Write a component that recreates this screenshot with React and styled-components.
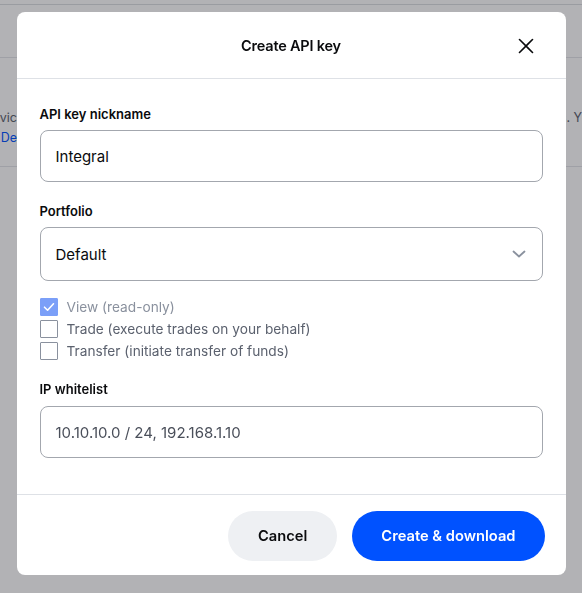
import React from "react";
import styled, { createGlobalStyle } from "styled-components";

const GlobalStyle = createGlobalStyle`
  html, body {
    margin: 0;
    padding: 0;
    background: #ffffff;
    font-family: Inter, "Noto Sans", sans-serif;
    -webkit-font-smoothing: antialiased;
  }
  * { box-sizing: border-box; }
`;

const Page = styled.div`
  width: 582px;
  height: 593px;
  overflow: hidden;
  background: #ffffff;
`;

const TopBand = styled.div`
  height: 5px;
  border-bottom: 1px solid #dcdee2;
`;

const PageHeader = styled.div`
  height: 53px;
  border-bottom: 1px solid #e3e5e9;
`;

const PageSection = styled.div`
  height: 109px;
  border-bottom: 1px solid #e3e5e9;
  display: flex;
  justify-content: space-between;
  align-items: flex-start;
  padding-top: 50px;
`;

const BgColumn = styled.div`
  width: ${(p) => (p.$right ? "auto" : "17px")};
  display: flex;
  flex-direction: column;
  align-items: ${(p) => (p.$right ? "flex-start" : "flex-end")};
  white-space: nowrap;
  font-size: 12.5px;
  line-height: 20px;
  color: #5b616e;
`;

const BgLink = styled.span`
  color: #0052ff;
`;

const Overlay = styled.div`
  position: fixed;
  inset: 0;
  background: rgba(20, 22, 30, 0.33);
  display: flex;
  align-items: flex-start;
  justify-content: center;
  padding-top: 12px;
`;

const Modal = styled.div`
  width: 549px;
  background: #ffffff;
  border-radius: 8px;
  display: flex;
  flex-direction: column;
`;

const Header = styled.div`
  height: 67px;
  border-bottom: 1px solid #dee1e6;
  display: flex;
  align-items: center;
  justify-content: center;
  position: relative;
`;

const Title = styled.h2`
  margin: 0;
  font-size: 14.5px;
  font-weight: 600;
  color: #0a0b0d;
  letter-spacing: -0.2px;
`;

const CloseButton = styled.button`
  position: absolute;
  right: 29px;
  top: 23px;
  width: 22px;
  height: 22px;
  padding: 0;
  border: none;
  background: transparent;
  display: flex;
  align-items: center;
  justify-content: center;
  cursor: pointer;
`;

const Body = styled.div`
  padding: 27px 23px 36px;
  display: flex;
  flex-direction: column;
`;

const Field = styled.div`
  display: flex;
  flex-direction: column;
  margin-top: ${(p) => p.$top || 0}px;
`;

const Label = styled.label`
  font-size: 13px;
  line-height: 16px;
  font-weight: 600;
  color: #0a0b0d;
  margin-bottom: ${(p) => p.$gap || 8}px;
`;

const Input = styled.div`
  height: ${(p) => p.$height || 52}px;
  border: 1px solid #a3a7ae;
  border-radius: 8px;
  display: flex;
  align-items: center;
  justify-content: space-between;
  padding: 0 16px 0 15px;
  font-size: 15px;
  color: ${(p) => (p.$muted ? "#4a4f5a" : "#0a0b0d")};
`;

const CheckList = styled.div`
  display: flex;
  flex-direction: column;
  margin-top: 15px;
`;

const CheckRow = styled.div`
  height: 22px;
  display: flex;
  align-items: center;
  gap: 9px;
  font-size: 13.7px;
  color: ${(p) => (p.$disabled ? "#8a919e" : "#5b616e")};
`;

const Box = styled.span`
  width: 18px;
  height: 18px;
  border: 1px solid ${(p) => (p.$checked ? "#7b9ff8" : "#8a919e")};
  background: ${(p) => (p.$checked ? "#7b9ff8" : "#ffffff")};
  border-radius: 1px;
  display: flex;
  align-items: center;
  justify-content: center;
`;

const Footer = styled.div`
  border-top: 1px solid #dee1e6;
  padding: 16px 21px 14px;
  display: flex;
  justify-content: flex-end;
  gap: 15px;
`;

const Button = styled.button`
  height: 50px;
  border: none;
  border-radius: 25px;
  padding: 0 ${(p) => (p.$primary ? 29 : 30)}px;
  font-family: inherit;
  font-size: 14.7px;
  font-weight: 600;
  background: ${(p) => (p.$primary ? "#0052ff" : "#eef0f3")};
  color: ${(p) => (p.$primary ? "#ffffff" : "#0a0b0d")};
  cursor: pointer;
`;

function Checkbox({ checked, disabled, children }) {
  return (
    <CheckRow $disabled={disabled}>
      <Box $checked={checked}>
        {checked && (
          <svg width="12" height="10" viewBox="0 0 12 10" fill="none">
            <path d="M1.5 5.2L4.6 8.2L10.5 1.8" stroke="#ffffff" strokeWidth="1.6" strokeLinecap="round" strokeLinejoin="round" />
          </svg>
        )}
      </Box>
      {children}
    </CheckRow>
  );
}

export default function App() {
  return (
    <>
      <GlobalStyle />
      <Page>
        <TopBand />
        <PageHeader />
        <PageSection>
          <BgColumn>
            <span>API servic</span>
            <BgLink>the De</BgLink>
          </BgColumn>
          <BgColumn $right>
            <span>s. Y</span>
          </BgColumn>
        </PageSection>
      </Page>
      <Overlay>
        <Modal>
          <Header>
            <Title>Create API key</Title>
            <CloseButton aria-label="Close">
              <svg width="16" height="16" viewBox="0 0 16 16" fill="none">
                <path d="M1.5 1.5L14.5 14.5M14.5 1.5L1.5 14.5" stroke="#0a0b0d" strokeWidth="1.6" strokeLinecap="round" />
              </svg>
            </CloseButton>
          </Header>
          <Body>
            <Field>
              <Label>API key nickname</Label>
              <Input>Integral</Input>
            </Field>
            <Field $top={21}>
              <Label>Portfolio</Label>
              <Input $height={54}>
                Default
                <svg width="14" height="8" viewBox="0 0 14 8" fill="none">
                  <path d="M1.5 1.5L7 6.5L12.5 1.5" stroke="#8a919e" strokeWidth="1.8" strokeLinecap="round" strokeLinejoin="round" />
                </svg>
              </Input>
            </Field>
            <CheckList>
              <Checkbox checked disabled>View (read-only)</Checkbox>
              <Checkbox>Trade (execute trades on your behalf)</Checkbox>
              <Checkbox>Transfer (initiate transfer of funds)</Checkbox>
            </CheckList>
            <Field $top={19}>
              <Label $gap={9}>IP whitelist</Label>
              <Input $muted>10.10.10.0 / 24, 192.168.1.10</Input>
            </Field>
          </Body>
          <Footer>
            <Button>Cancel</Button>
            <Button $primary>Create &amp; download</Button>
          </Footer>
        </Modal>
      </Overlay>
    </>
  );
}
